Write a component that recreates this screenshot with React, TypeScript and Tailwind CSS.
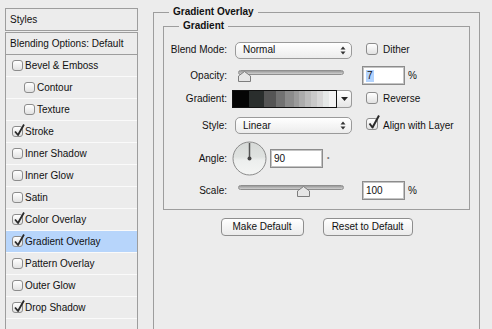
import React from "react";

function Check({ checked }: { checked?: boolean }) {
  return (
    <span className="relative inline-block w-[11px] h-[11px] rounded-[3px] border border-[#8c8c8c] bg-linear-to-b from-white to-[#e2e2e2] shrink-0">
      {checked && (
        <svg className="absolute left-[0px] top-[-4px]" width="13" height="14" viewBox="0 0 13 14">
          <path d="M2 8.5 L5 12 L11 1.5" stroke="#2a2a2a" strokeWidth="1.8" fill="none" strokeLinejoin="round" />
        </svg>
      )}
    </span>
  );
}

function BigCheck({ checked }: { checked?: boolean }) {
  return (
    <span className="relative inline-block w-[12px] h-[12px] rounded-[3px] border border-[#8c8c8c] bg-linear-to-b from-white to-[#e2e2e2] shrink-0">
      {checked && (
        <svg className="absolute left-[0px] top-[-5px]" width="14" height="16" viewBox="0 0 14 16">
          <path d="M2.5 9.5 L5.5 13.5 L12 1.5" stroke="#2a2a2a" strokeWidth="2" fill="none" strokeLinejoin="round" />
        </svg>
      )}
    </span>
  );
}

function Select({ value }: { value: string }) {
  return (
    <div className="ml-[8px] w-[117px] h-[17px] rounded-[5px] border border-[#9a9a9a] bg-linear-to-b from-white to-[#ececec] flex items-center pl-[7px] pr-[5px] justify-between">
      <span>{value}</span>
      <svg width="6" height="9" viewBox="0 0 6 9">
        <path d="M0.5 3.5 L3 0.5 L5.5 3.5 Z" fill="#333" />
        <path d="M0.5 5.5 L3 8.5 L5.5 5.5 Z" fill="#333" />
      </svg>
    </div>
  );
}

function Slider({ pos }: { pos: number }) {
  return (
    <div className="relative ml-[11px] w-[106px] h-[14px]">
      <div className="absolute left-0 right-0 top-[1px] h-[5px] rounded-[3px] border border-[#8e8e8e] bg-linear-to-b from-[#9a9a9a] to-[#d0d0d0]" />
      <svg className="absolute top-[2px]" style={{ left: pos }} width="13" height="11" viewBox="0 0 13 11">
        <path d="M6.5 0.5 L12.5 5 L12.5 10.5 L0.5 10.5 L0.5 5 Z" fill="#e6e6e6" stroke="#7d7d7d" strokeWidth="1" />
      </svg>
    </div>
  );
}

function Input({ children, w }: { children: React.ReactNode; w: string }) {
  return (
    <div className={`${w} h-[19px] bg-white border border-[#8c8c8c] shadow-[inset_0_0_0_1px_#c4c4c4] flex items-center pl-[3px]`}>
      {children}
    </div>
  );
}

const gradientBands: [string, number][] = [
  ["#050505", 16],
  ["#2a2e2d", 15],
  ["#555555", 12],
  ["#727272", 9],
  ["#8b8b8b", 9],
  ["#9b9b9b", 5],
  ["#ababab", 6],
  ["#bbbbbb", 6],
  ["#c9c9c9", 6],
  ["#d7d7d7", 6],
  ["#e5e8e7", 6],
  ["#f3f3f3", 7],
];

const rows: { label: string; checked?: boolean; indent?: boolean; selected?: boolean }[] = [
  { label: "Bevel & Emboss" },
  { label: "Contour", indent: true },
  { label: "Texture", indent: true },
  { label: "Stroke", checked: true },
  { label: "Inner Shadow" },
  { label: "Inner Glow" },
  { label: "Satin" },
  { label: "Color Overlay", checked: true },
  { label: "Gradient Overlay", checked: true, selected: true },
  { label: "Pattern Overlay" },
  { label: "Outer Glow" },
  { label: "Drop Shadow", checked: true },
  { label: "" },
];

export default function App() {
  return (
    <div className="w-[492px] h-[329px] overflow-hidden bg-[#ececec] flex font-['Liberation_Sans',Arial,sans-serif] text-[10px] leading-[12px] text-[#111]">
      {/* Left styles panel */}
      <div className="ml-[5px] mt-[8px] w-[133px] flex flex-col shrink-0 overflow-hidden">
        <div className="h-[23px] shrink-0 border border-[#9d9d9d] flex items-center pl-[4px]">Styles</div>
        <div className="mt-[1px] flex-1 min-h-0 overflow-hidden border-x border-t border-[#9d9d9d] flex flex-col">
          <div className="h-[22px] shrink-0 border-b border-[#9d9d9d] flex items-center pl-[4px]">Blending Options: Default</div>
          {rows.map((r, i) => (
            <div
              key={i}
              className={`h-[22px] shrink-0 border-b border-[#fafafa] flex items-center gap-[2px] ${r.indent ? "pl-[18px]" : "pl-[6px]"} ${r.selected ? "bg-[#b7d5fb]" : ""}`}
            >
              {r.label && <Check checked={r.checked} />}
              <span>{r.label}</span>
            </div>
          ))}
        </div>
      </div>

      {/* Right panel */}
      <div className="ml-[15px] shrink-0">
        <fieldset className="mt-[5px] w-[327px] h-[340px] border border-[#9d9d9d] p-0 m-0">
          <legend className="ml-[15px] px-[4px] font-bold leading-[14px]">Gradient Overlay</legend>
          <fieldset className="mx-[9px] w-[307px] border border-[#9d9d9d] p-0 pb-[9px]">
            <legend className="ml-[15px] px-[4px] font-bold leading-[14px]">Gradient</legend>

            {/* Blend mode */}
            <div className="flex items-center h-[18px] mt-[8px]">
              <span className="w-[63px] text-right">Blend Mode:</span>
              <Select value="Normal" />
              <span className="ml-[14px]"><BigCheck /></span>
              <span className="ml-[5px]">Dither</span>
            </div>

            {/* Opacity */}
            <div className="flex items-center h-[19px] mt-[7px]">
              <span className="w-[63px] text-right">Opacity:</span>
              <Slider pos={0} />
              <div className="ml-[18px]">
                <Input w="w-[43px]">
                  <span className="bg-[#b3d3fd] px-[1px]">7</span>
                </Input>
              </div>
              <span className="ml-[3px]">%</span>
            </div>

            {/* Gradient */}
            <div className="flex items-center h-[18px] mt-[5px]">
              <span className="w-[63px] text-right">Gradient:</span>
              <div className="ml-[5px] flex h-[18px]">
                <div className="flex border border-[#111] w-[105px]">
                  {gradientBands.map(([c, w], i) => (
                    <div key={i} className="h-full" style={{ background: c, width: w, flexGrow: i === gradientBands.length - 1 ? 1 : 0 }} />
                  ))}
                </div>
                <div className="w-[15px] border border-l-0 border-[#9a9a9a] rounded-r-[4px] bg-linear-to-b from-white to-[#e6e6e6] flex items-center justify-center">
                  <svg width="7" height="4" viewBox="0 0 7 4"><path d="M0 0 L7 0 L3.5 4 Z" fill="#222" /></svg>
                </div>
              </div>
              <span className="ml-[14px]"><BigCheck /></span>
              <span className="ml-[5px]">Reverse</span>
            </div>

            {/* Style */}
            <div className="flex items-center h-[17px] mt-[9px]">
              <span className="w-[63px] text-right">Style:</span>
              <Select value="Linear" />
              <span className="ml-[14px]"><BigCheck checked /></span>
              <span className="ml-[5px]">Align with Layer</span>
            </div>

            {/* Angle */}
            <div className="flex items-center h-[35px] mt-[7px]">
              <span className="w-[63px] text-right">Angle:</span>
              <svg className="ml-[5px]" width="35" height="35" viewBox="0 0 35 35">
                <defs>
                  <linearGradient id="dial" x1="0" y1="0" x2="0" y2="1">
                    <stop offset="0" stopColor="#d6d9d7" />
                    <stop offset="0.45" stopColor="#dfe2e0" />
                    <stop offset="0.55" stopColor="#eceeed" />
                    <stop offset="1" stopColor="#f4f5f4" />
                  </linearGradient>
                </defs>
                <circle cx="17.5" cy="17.5" r="16.5" fill="url(#dial)" stroke="#8a8a8a" strokeWidth="1" />
                <line x1="17.5" y1="17.5" x2="17.5" y2="2" stroke="#555" strokeWidth="1.5" />
                <circle cx="17.5" cy="17.5" r="2" fill="#444" />
              </svg>
              <div className="ml-[3px]">
                <Input w="w-[53px]">90</Input>
              </div>
              <span className="ml-[4px] text-[7px] text-[#777] -mt-[2px]">•</span>
            </div>

            {/* Scale */}
            <div className="flex items-center h-[19px] mt-[5px]">
              <span className="w-[63px] text-right">Scale:</span>
              <Slider pos={59} />
              <div className="ml-[18px]">
                <Input w="w-[43px]">100</Input>
              </div>
              <span className="ml-[3px]">%</span>
            </div>
          </fieldset>

          <div className="flex justify-center gap-[19px] mt-[8px]">
            <div className="w-[83px] h-[18px] rounded-[4px] border border-[#8e8e8e] bg-linear-to-b from-white to-[#ebebeb] flex items-center justify-center">Make Default</div>
            <div className="w-[90px] h-[18px] rounded-[4px] border border-[#8e8e8e] bg-linear-to-b from-white to-[#ebebeb] flex items-center justify-center">Reset to Default</div>
          </div>
        </fieldset>
      </div>
    </div>
  );
}
